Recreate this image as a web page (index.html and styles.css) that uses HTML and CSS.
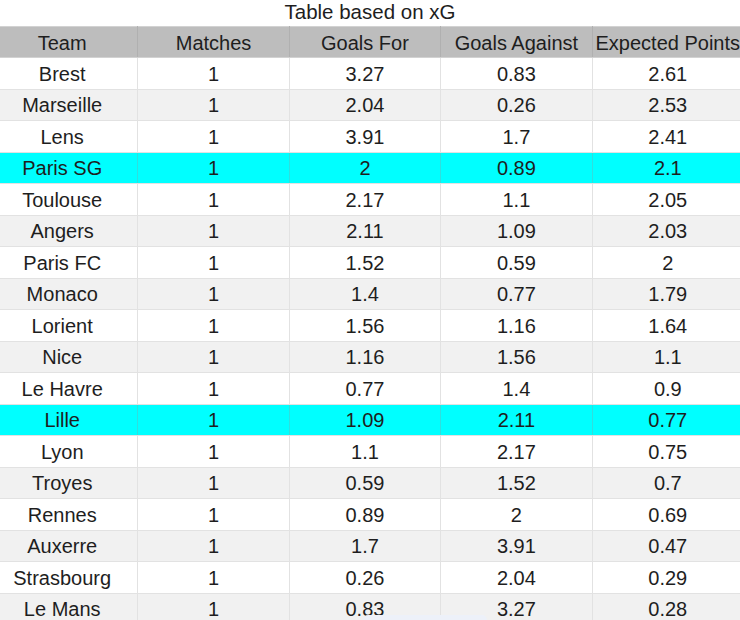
FILE: index.html
```html
<!DOCTYPE html>
<html>
<head>
<meta charset="utf-8">
<link rel="stylesheet" href="styles.css">
</head>
<body>
<div class="page">
  <div class="title">Table based on xG</div>
  <div class="wrap">
    <table class="xg">
      <thead>
        <tr><th>Team</th><th>Matches</th><th>Goals For</th><th>Goals Against</th><th>Expected Points</th></tr>
      </thead>
      <tbody>
        <tr><td>Brest</td><td>1</td><td>3.27</td><td>0.83</td><td>2.61</td></tr>
        <tr class="alt"><td>Marseille</td><td>1</td><td>2.04</td><td>0.26</td><td>2.53</td></tr>
        <tr><td>Lens</td><td>1</td><td>3.91</td><td>1.7</td><td>2.41</td></tr>
        <tr class="hl"><td>Paris SG</td><td>1</td><td>2</td><td>0.89</td><td>2.1</td></tr>
        <tr><td>Toulouse</td><td>1</td><td>2.17</td><td>1.1</td><td>2.05</td></tr>
        <tr class="alt"><td>Angers</td><td>1</td><td>2.11</td><td>1.09</td><td>2.03</td></tr>
        <tr><td>Paris FC</td><td>1</td><td>1.52</td><td>0.59</td><td>2</td></tr>
        <tr class="alt"><td>Monaco</td><td>1</td><td>1.4</td><td>0.77</td><td>1.79</td></tr>
        <tr><td>Lorient</td><td>1</td><td>1.56</td><td>1.16</td><td>1.64</td></tr>
        <tr class="alt"><td>Nice</td><td>1</td><td>1.16</td><td>1.56</td><td>1.1</td></tr>
        <tr><td>Le Havre</td><td>1</td><td>0.77</td><td>1.4</td><td>0.9</td></tr>
        <tr class="hl"><td>Lille</td><td>1</td><td>1.09</td><td>2.11</td><td>0.77</td></tr>
        <tr><td>Lyon</td><td>1</td><td>1.1</td><td>2.17</td><td>0.75</td></tr>
        <tr class="alt"><td>Troyes</td><td>1</td><td>0.59</td><td>1.52</td><td>0.7</td></tr>
        <tr><td>Rennes</td><td>1</td><td>0.89</td><td>2</td><td>0.69</td></tr>
        <tr class="alt"><td>Auxerre</td><td>1</td><td>1.7</td><td>3.91</td><td>0.47</td></tr>
        <tr><td>Strasbourg</td><td>1</td><td>0.26</td><td>2.04</td><td>0.29</td></tr>
        <tr class="alt"><td>Le Mans</td><td>1</td><td>0.83</td><td>3.27</td><td>0.28</td></tr>
      </tbody>
    </table>
  </div>
  <div class="hint"></div>
</div>
</body>
</html>
```

FILE: styles.css
```css
html, body {
  margin: 0;
  padding: 0;
  background: #ffffff;
}
.page {
  position: relative;
  width: 740px;
  height: 620px;
  overflow: hidden;
  font-family: "Liberation Sans", Arial, sans-serif;
  color: #1e1e1e;
}
.title {
  height: 26px;
  line-height: 24px;
  font-size: 20.5px;
  text-align: center;
}
.wrap {
  overflow: hidden;
  width: 740px;
}
.xg {
  border-collapse: collapse;
  table-layout: fixed;
  width: 758px;
  margin-left: -14px;
  font-size: 20px;
}
.xg th, .xg td {
  width: 20%;
  text-align: center;
  padding: 1px 0 0 0;
  height: 29.5px;
  line-height: 22px;
  border: 1.5px solid #e2e2e2;
  white-space: nowrap;
  overflow: visible;
}
.xg th {
  background: #bdbdbd;
  font-weight: normal;
  height: 29px;
  border-color: #d2d2d2;
  border-left-color: #b0b0b0;
  border-right-color: #b0b0b0;
}
.xg tr.alt td {
  background: #f1f1f1;
}
.xg tr.hl td {
  background: #00ffff;
  border-left-color: #2fdede;
  border-right-color: #2fdede;
}
.hint {
  position: absolute;
  left: 363px;
  top: 615px;
  width: 124px;
  height: 12px;
  border-radius: 5px;
  background: #edf1f9;
}
```
